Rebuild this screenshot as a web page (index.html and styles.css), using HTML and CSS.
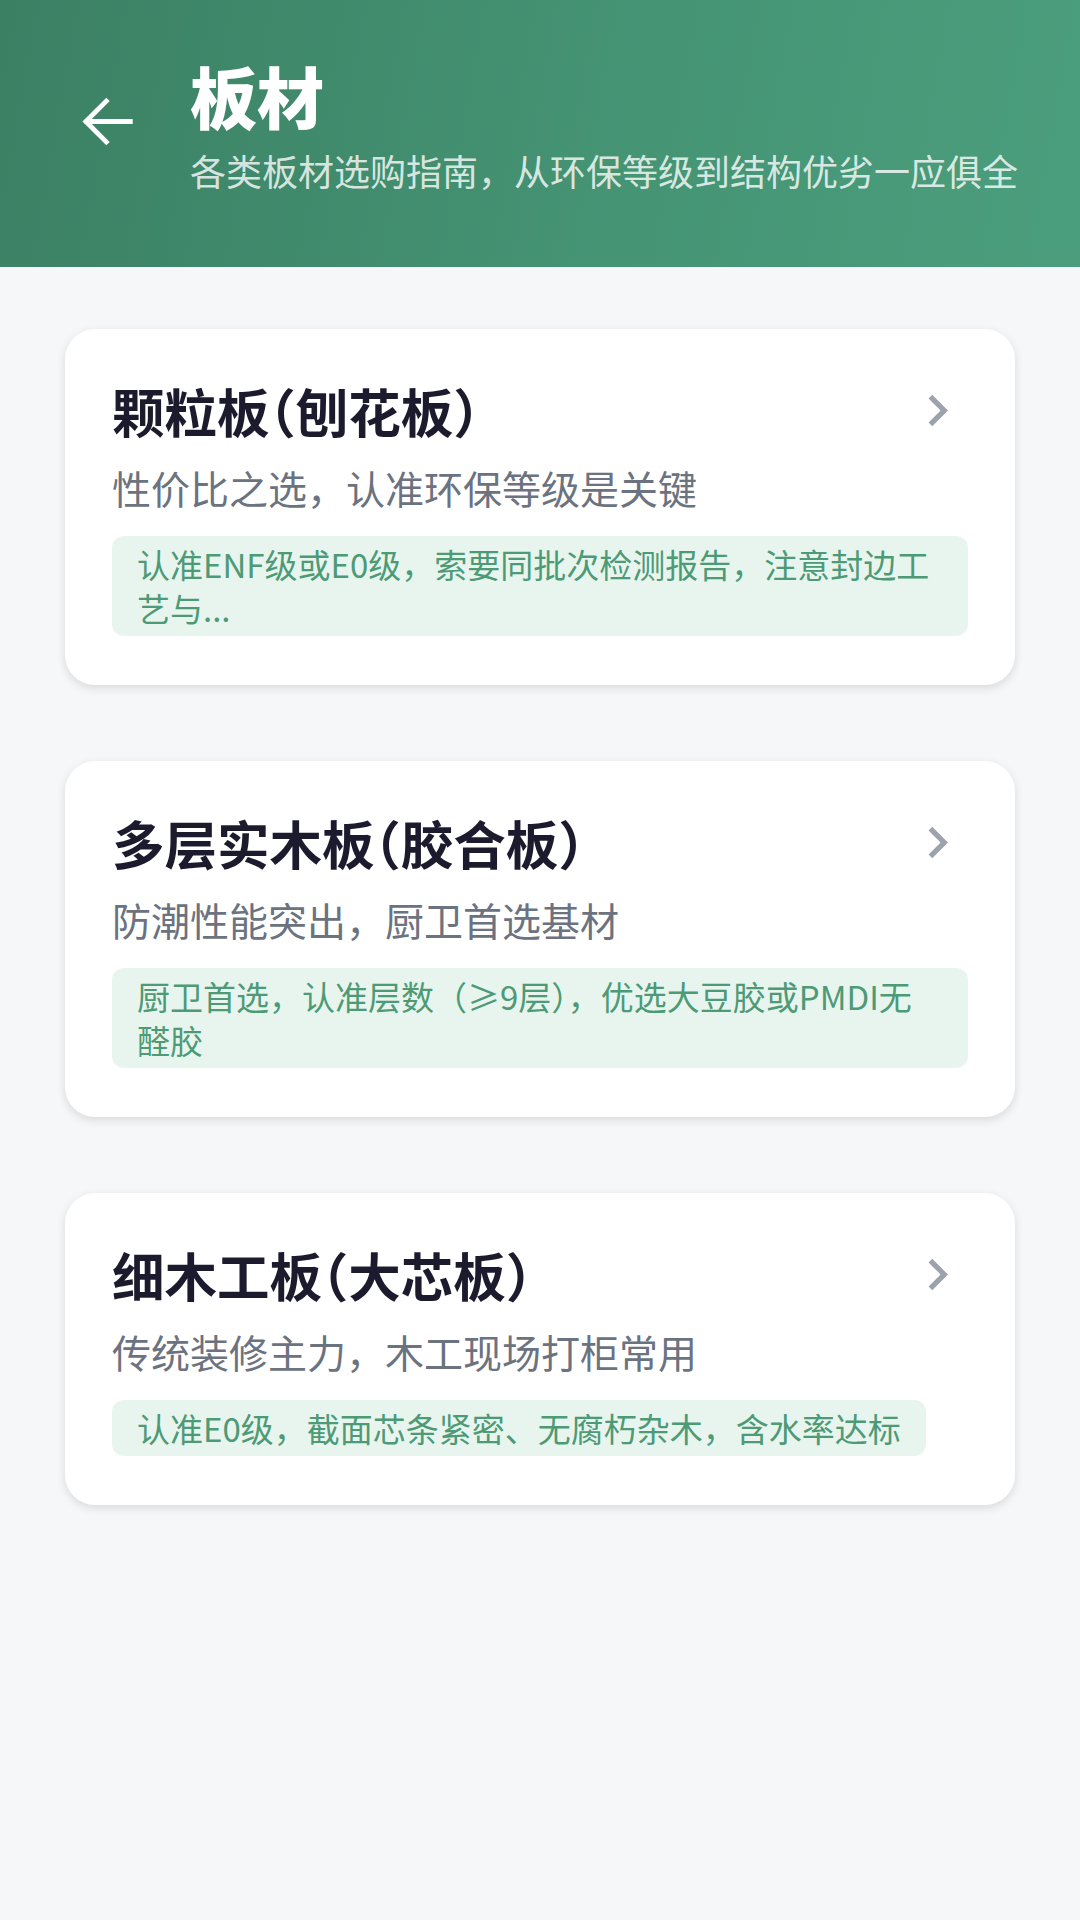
FILE: index.html
```html
<!DOCTYPE html>
<html lang="zh-CN">
<head>
<meta charset="utf-8">
<title>板材</title>
<link rel="stylesheet" href="styles.css">
</head>
<body>
<header class="header">
  <div class="back">
    <svg viewBox="0 0 24 24" width="73" height="73"><path d="M19.5 12H5.2M11.6 5.3L4.9 12l6.7 6.7" fill="none" stroke="#ffffff" stroke-width="1.6" stroke-linecap="square" stroke-linejoin="miter"/></svg>
  </div>
  <div class="head-text">
    <div class="head-title">板材</div>
    <div class="head-sub">各类板材选购指南，从环保等级到结构优劣一应俱全</div>
  </div>
</header>
<main class="list">
  <section class="card">
    <div class="card-top">
      <div class="card-title">颗粒板（刨花板）</div>
      <svg class="chev" viewBox="0 0 24 24" width="63" height="63"><path d="M10 6L8.59 7.41 13.17 12l-4.58 4.59L10 18l6-6z" fill="#9ca3af"/></svg>
    </div>
    <div class="card-sub">性价比之选，认准环保等级是关键</div>
    <div class="tag">认准ENF级或E0级，索要同批次检测报告，注意封边工艺与...</div>
  </section>
  <section class="card">
    <div class="card-top">
      <div class="card-title">多层实木板（胶合板）</div>
      <svg class="chev" viewBox="0 0 24 24" width="63" height="63"><path d="M10 6L8.59 7.41 13.17 12l-4.58 4.59L10 18l6-6z" fill="#9ca3af"/></svg>
    </div>
    <div class="card-sub">防潮性能突出，厨卫首选基材</div>
    <div class="tag">厨卫首选，认准层数（≥9层），优选大豆胶或PMDI无醛胶</div>
  </section>
  <section class="card">
    <div class="card-top">
      <div class="card-title">细木工板（大芯板）</div>
      <svg class="chev" viewBox="0 0 24 24" width="63" height="63"><path d="M10 6L8.59 7.41 13.17 12l-4.58 4.59L10 18l6-6z" fill="#9ca3af"/></svg>
    </div>
    <div class="card-sub">传统装修主力，木工现场打柜常用</div>
    <div class="tag">认准E0级，截面芯条紧密、无腐朽杂木，含水率达标</div>
  </section>
</main>
</body>
</html>
```

FILE: styles.css
```css
* { box-sizing: border-box; }
html, body {
  margin: 0;
  padding: 0;
}
body {
  width: 1080px;
  min-height: 1920px;
  background: #f6f7f9;
  font-family: "Noto Sans CJK SC", "Noto Sans", sans-serif;
}
.header {
  height: 267px;
  background: linear-gradient(100deg, #3c8064 0%, #459575 60%, #4b9e7d 100%);
  display: flex;
  align-items: flex-start;
  padding: 54px 40px 0 71px;
}
.back {
  width: 73px;
  height: 73px;
  margin-top: 31px;
  flex: none;
}
.back svg { display: block; }
.head-text {
  margin-left: 46px;
  display: flex;
  flex-direction: column;
}
.head-title {
  color: #ffffff;
  font-size: 67px;
  font-weight: 900;
  line-height: 82px;
}
.head-sub {
  color: rgba(255, 255, 255, 0.8);
  font-size: 36px;
  line-height: 51px;
  margin-top: 9px;
  white-space: nowrap;
}
.list {
  display: flex;
  flex-direction: column;
  gap: 76px;
  padding: 62px 65px 0 65px;
}
.card {
  background: #ffffff;
  border-radius: 30px;
  padding: 47px 47px 49px 47px;
  box-shadow: 0 3px 10px rgba(0, 0, 0, 0.12);
  display: flex;
  flex-direction: column;
  align-items: flex-start;
}
.card-top {
  width: 100%;
  display: flex;
  align-items: center;
  justify-content: space-between;
  height: 68px;
}
.card-title {
  font-size: 52.5px;
  font-weight: 700;
  color: #1c1b2e;
  line-height: 68px;
  font-feature-settings: "halt" 1;
}
.chev {
  display: block;
  flex: none;
  margin-right: -1px;
}
.card-sub {
  font-size: 39px;
  line-height: 55px;
  color: #6b7280;
  margin-top: 16px;
}
.tag {
  margin-top: 21px;
  background: #e8f5ee;
  color: #4d9a76;
  font-size: 33px;
  line-height: 44px;
  padding: 6px 25px;
  border-radius: 12px;
}
```
